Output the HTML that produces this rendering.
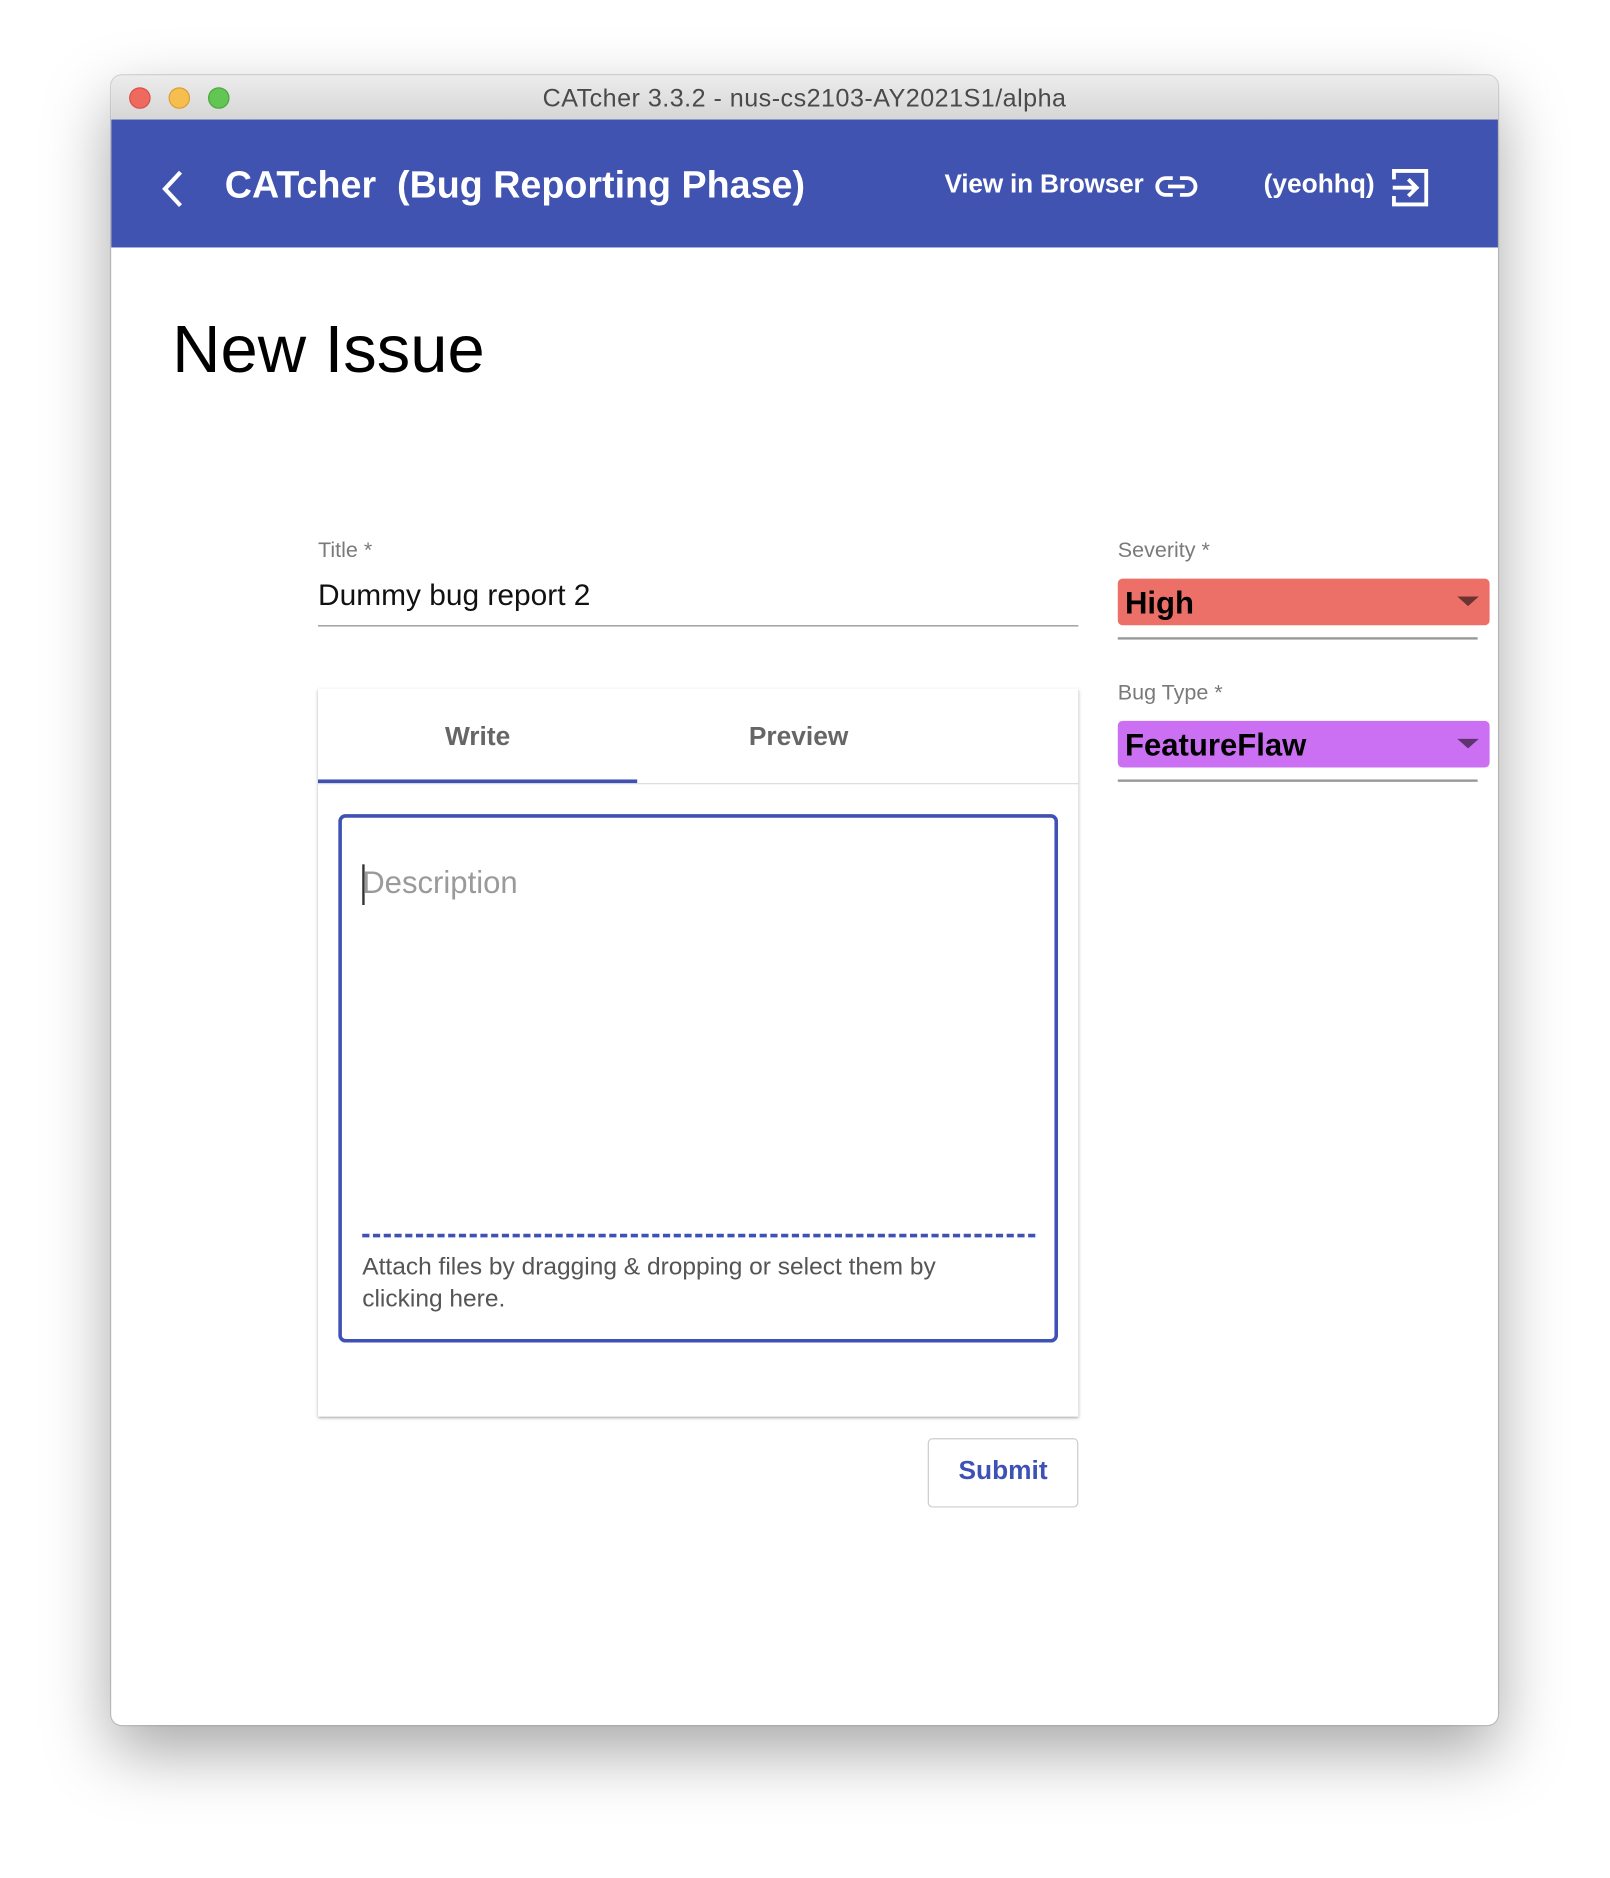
<!DOCTYPE html>
<html><head><meta charset="utf-8">
<style>
html,body{margin:0;padding:0;background:#fff;width:1610px;height:1874px;overflow:hidden}
#s{position:absolute;left:0;top:0;width:1350px;height:1571px;transform:scale(1.1955);transform-origin:0 0;font-family:"Liberation Sans",sans-serif}
.a{position:absolute;white-space:nowrap}
#win{position:absolute;left:93px;top:63px;width:1160px;height:1380px;background:#fff;border-radius:9px;box-shadow:0 22px 55px rgba(0,0,0,.35),0 0 0 1px rgba(0,0,0,.15);overflow:hidden}
</style></head><body><div id="s">
<div id="win">
 <div class="a" style="left:0;top:0;width:1160px;height:37px;background:linear-gradient(#ececec,#d6d6d6);border-bottom:1px solid #bdbdbd"></div>
 <div class="a" style="left:15px;top:10px;width:18px;height:18px;border-radius:50%;background:#ee6a5f;box-shadow:inset 0 0 0 1px #d6534a"></div>
 <div class="a" style="left:48px;top:10px;width:18px;height:18px;border-radius:50%;background:#f6be4f;box-shadow:inset 0 0 0 1px #d9a03a"></div>
 <div class="a" style="left:81px;top:10px;width:18px;height:18px;border-radius:50%;background:#62c554;box-shadow:inset 0 0 0 1px #4ea83f"></div>
 <div class="a" style="left:0;width:1160px;top:8px;text-align:center;font-size:21px;color:#4a4a4a;letter-spacing:0.4px">CATcher 3.3.2 - nus-cs2103-AY2021S1/alpha</div>
 <div class="a" style="left:0;top:37px;width:1160px;height:107px;background:#4153b0"></div>
 <svg class="a" style="left:40px;top:78px" width="24" height="34" viewBox="0 0 24 34"><path d="M18 3 L5 17 L18 31" stroke="#fff" stroke-width="3.5" fill="none"/></svg>
 <div class="a" style="left:95px;top:73px;font-size:31.5px;font-weight:bold;color:#fff">CATcher &nbsp;(Bug Reporting Phase)</div>
 <div class="a" style="left:697px;top:78px;font-size:22px;font-weight:bold;color:#fff;letter-spacing:-0.2px">View in Browser</div>
 <svg class="a" style="left:873px;top:83px" width="36" height="20" viewBox="0 0 36 20"><path d="M15 3 H9 a7 7 0 0 0 0 14 H15 M21 3 H27 a7 7 0 0 1 0 14 H21 M11 10 H25" stroke="#fff" stroke-width="3.2" fill="none"/></svg>
 <div class="a" style="left:964px;top:78px;font-size:22px;font-weight:bold;color:#fff">(yeohhq)</div>
 <svg class="a" style="left:1070px;top:77px" width="34" height="34" viewBox="0 0 34 34"><path d="M3 10 V3 H30 V31 H3 V24" stroke="#fff" stroke-width="3.2" fill="none"/><path d="M2 17 H22 M15 10 L22 17 L15 24" stroke="#fff" stroke-width="3.2" fill="none"/></svg>

 <div class="a" style="left:51px;top:196px;font-size:56px;color:#000">New Issue</div>

 <div class="a" style="left:173px;top:387px;font-size:18px;color:#7a7a7a">Title *</div>
 <div class="a" style="left:173px;top:421px;font-size:25px;color:#111">Dummy bug report 2</div>
 <div class="a" style="left:173px;top:460px;width:636px;height:1px;background:#8a8a8a"></div>

 <div class="a" style="left:842px;top:387px;font-size:18px;color:#7a7a7a">Severity *</div>
 <div class="a" style="left:842px;top:421px;width:311px;height:39px;background:#ed7068;border-radius:4px"></div>
 <div class="a" style="left:848px;top:426px;font-size:26px;font-weight:bold;color:#000">High</div>
 <div class="a" style="left:1126px;top:436px;width:0;height:0;border-left:9px solid transparent;border-right:9px solid transparent;border-top:8px solid #6d3333"></div>
 <div class="a" style="left:842px;top:470px;width:301px;height:2px;background:#999"></div>

 <div class="a" style="left:842px;top:506px;font-size:18px;color:#7a7a7a">Bug Type *</div>
 <div class="a" style="left:842px;top:540px;width:311px;height:39px;background:#cb70f3;border-radius:4px"></div>
 <div class="a" style="left:848px;top:545px;font-size:26px;font-weight:bold;color:#000">FeatureFlaw</div>
 <div class="a" style="left:1126px;top:555px;width:0;height:0;border-left:9px solid transparent;border-right:9px solid transparent;border-top:8px solid #5e3470"></div>
 <div class="a" style="left:842px;top:589px;width:301px;height:2px;background:#999"></div>

 <div class="a" style="left:173px;top:513px;width:636px;height:609px;background:#fff;box-shadow:0 1px 3px rgba(0,0,0,.25),0 1px 1px rgba(0,0,0,.1)"></div>
 <div class="a" style="left:173px;top:592px;width:636px;height:1px;background:#ddd"></div>
 <div class="a" style="left:173px;top:589px;width:267px;height:3px;background:#3f51b5"></div>
 <div class="a" style="left:173px;width:267px;top:540px;text-align:center;font-size:22px;font-weight:bold;color:#666">Write</div>
 <div class="a" style="left:440px;width:270px;top:540px;text-align:center;font-size:22px;font-weight:bold;color:#666">Preview</div>
 <div class="a" style="left:190px;top:618px;width:596px;height:436px;border:3px solid #3f51b5;border-radius:6px"></div>
 <div class="a" style="left:210px;top:660px;width:2px;height:34px;background:#333"></div>
 <div class="a" style="left:210px;top:660px;font-size:26px;color:#9a9a9a">Description</div>
 <div class="a" style="left:210px;top:969px;width:563px;border-top:3px dashed #3f51b5"></div>
 <div class="a" style="left:210px;top:983px;font-size:20.5px;color:#555;line-height:27px;white-space:normal;width:520px">Attach files by dragging &amp; dropping or select them by clicking here.</div>

 <div class="a" style="left:683px;top:1140px;width:124px;height:56px;border:1px solid #ccc;border-radius:4px"></div>
 <div class="a" style="left:683px;width:126px;top:1154px;text-align:center;font-size:22px;font-weight:bold;color:#3f51b5">Submit</div>
</div>
</div></body></html>
